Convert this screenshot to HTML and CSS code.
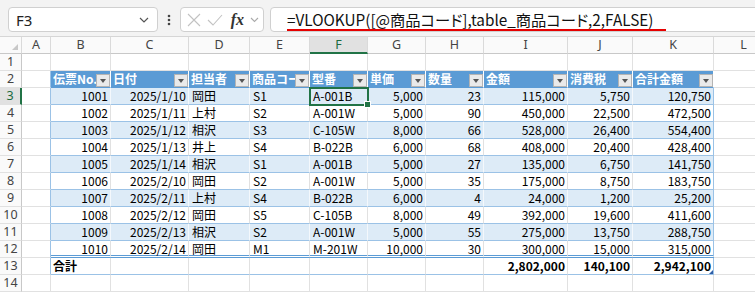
FILE: index.html
```html
<!DOCTYPE html>
<html lang="ja">
<head>
  <meta charset="UTF-8" />
  <title>売上一覧</title>
  <link rel="stylesheet" href="styles.css">
</head>
<body>

<div class="formula-bar">
  <div class="namebox">
    <span>F3</span>
    <svg width="10" height="6" viewBox="0 0 10 6"><path d="M1 1l4 4 4-4" fill="none" stroke="#555" stroke-width="1.2"/></svg>
  </div>
  <div class="dots">
    <svg width="4" height="12" viewBox="0 0 4 12"><circle cx="2" cy="2" r="1.3" fill="#444"/><circle cx="2" cy="6" r="1.3" fill="#444"/><circle cx="2" cy="10" r="1.3" fill="#444"/></svg>
  </div>
  <div class="fxbox">
    <svg width="14" height="14" viewBox="0 0 14 14"><path d="M1 1l12 12M13 1L1 13" stroke="#c2c2c2" stroke-width="1.1"/></svg>
    <svg width="16" height="12" viewBox="0 0 16 12"><path d="M1 6l5 5L15 1" fill="none" stroke="#c2c2c2" stroke-width="1.1"/></svg>
    <i class="fx">fx</i>
    <svg width="9" height="6" viewBox="0 0 9 6"><path d="M1 1l3.5 3.5L8 1" fill="none" stroke="#aaa" stroke-width="1.1"/></svg>
  </div>
  <div class="formula">
    <span class="ftext">=VLOOKUP([@商品コード],table_商品コード,2,FALSE)</span>
  </div>
</div>

<div class="sheet">
  <!-- column letters -->
  <div class="row colhead">
    <div class="corner"><span class="tri"></span></div>
    <div class="ch">A</div>
    <div class="ch">B</div>
    <div class="ch">C</div>
    <div class="ch">D</div>
    <div class="ch">E</div>
    <div class="ch active">F</div>
    <div class="ch">G</div>
    <div class="ch">H</div>
    <div class="ch">I</div>
    <div class="ch">J</div>
    <div class="ch">K</div>
    <div class="ch">L</div>
  </div>

  <div class="row">
    <div class="rh">1</div>
    <div class="c"></div><div class="c"></div><div class="c"></div><div class="c"></div><div class="c"></div><div class="c"></div>
    <div class="c"></div><div class="c"></div><div class="c"></div><div class="c"></div><div class="c"></div><div class="c"></div>
  </div>

  <!-- table header -->
  <div class="row">
    <div class="rh">2</div>
    <div class="c edge"></div>
    <div class="c th"><span>伝票No.</span><b class="fbtn"></b></div>
    <div class="c th"><span>日付</span><b class="fbtn"></b></div>
    <div class="c th"><span>担当者</span><b class="fbtn"></b></div>
    <div class="c th"><span>商品コード</span><b class="fbtn"></b></div>
    <div class="c th"><span>型番</span><b class="fbtn"></b></div>
    <div class="c th"><span>単価</span><b class="fbtn"></b></div>
    <div class="c th"><span>数量</span><b class="fbtn"></b></div>
    <div class="c th"><span>金額</span><b class="fbtn"></b></div>
    <div class="c th"><span>消費税</span><b class="fbtn"></b></div>
    <div class="c th"><span>合計金額</span><b class="fbtn"></b></div>
    <div class="c"></div>
  </div>

  <div class="row band">
    <div class="rh active">3</div>
    <div class="c edge"></div>
    <div class="c td n">1001</div><div class="c td n">2025/1/10</div><div class="c td">岡田</div><div class="c td">S1</div>
    <div class="c td sel">A-001B</div><div class="c td n">5,000</div><div class="c td n">23</div><div class="c td n">115,000</div>
    <div class="c td n">5,750</div><div class="c td n last">120,750</div>
    <div class="c"></div>
  </div>
  <div class="row">
    <div class="rh">4</div>
    <div class="c edge"></div>
    <div class="c td n">1002</div><div class="c td n">2025/1/11</div><div class="c td">上村</div><div class="c td">S2</div>
    <div class="c td">A-001W</div><div class="c td n">5,000</div><div class="c td n">90</div><div class="c td n">450,000</div>
    <div class="c td n">22,500</div><div class="c td n last">472,500</div>
    <div class="c"></div>
  </div>
  <div class="row band">
    <div class="rh">5</div>
    <div class="c edge"></div>
    <div class="c td n">1003</div><div class="c td n">2025/1/12</div><div class="c td">相沢</div><div class="c td">S3</div>
    <div class="c td">C-105W</div><div class="c td n">8,000</div><div class="c td n">66</div><div class="c td n">528,000</div>
    <div class="c td n">26,400</div><div class="c td n last">554,400</div>
    <div class="c"></div>
  </div>
  <div class="row">
    <div class="rh">6</div>
    <div class="c edge"></div>
    <div class="c td n">1004</div><div class="c td n">2025/1/13</div><div class="c td">井上</div><div class="c td">S4</div>
    <div class="c td">B-022B</div><div class="c td n">6,000</div><div class="c td n">68</div><div class="c td n">408,000</div>
    <div class="c td n">20,400</div><div class="c td n last">428,400</div>
    <div class="c"></div>
  </div>
  <div class="row band">
    <div class="rh">7</div>
    <div class="c edge"></div>
    <div class="c td n">1005</div><div class="c td n">2025/1/14</div><div class="c td">相沢</div><div class="c td">S1</div>
    <div class="c td">A-001B</div><div class="c td n">5,000</div><div class="c td n">27</div><div class="c td n">135,000</div>
    <div class="c td n">6,750</div><div class="c td n last">141,750</div>
    <div class="c"></div>
  </div>
  <div class="row">
    <div class="rh">8</div>
    <div class="c edge"></div>
    <div class="c td n">1006</div><div class="c td n">2025/2/10</div><div class="c td">岡田</div><div class="c td">S2</div>
    <div class="c td">A-001W</div><div class="c td n">5,000</div><div class="c td n">35</div><div class="c td n">175,000</div>
    <div class="c td n">8,750</div><div class="c td n last">183,750</div>
    <div class="c"></div>
  </div>
  <div class="row band">
    <div class="rh">9</div>
    <div class="c edge"></div>
    <div class="c td n">1007</div><div class="c td n">2025/2/11</div><div class="c td">上村</div><div class="c td">S4</div>
    <div class="c td">B-022B</div><div class="c td n">6,000</div><div class="c td n">4</div><div class="c td n">24,000</div>
    <div class="c td n">1,200</div><div class="c td n last">25,200</div>
    <div class="c"></div>
  </div>
  <div class="row">
    <div class="rh">10</div>
    <div class="c edge"></div>
    <div class="c td n">1008</div><div class="c td n">2025/2/12</div><div class="c td">岡田</div><div class="c td">S5</div>
    <div class="c td">C-105B</div><div class="c td n">8,000</div><div class="c td n">49</div><div class="c td n">392,000</div>
    <div class="c td n">19,600</div><div class="c td n last">411,600</div>
    <div class="c"></div>
  </div>
  <div class="row band">
    <div class="rh">11</div>
    <div class="c edge"></div>
    <div class="c td n">1009</div><div class="c td n">2025/2/13</div><div class="c td">相沢</div><div class="c td">S2</div>
    <div class="c td">A-001W</div><div class="c td n">5,000</div><div class="c td n">55</div><div class="c td n">275,000</div>
    <div class="c td n">13,750</div><div class="c td n last">288,750</div>
    <div class="c"></div>
  </div>
  <div class="row lastdata">
    <div class="rh">12</div>
    <div class="c edge"></div>
    <div class="c td n">1010</div><div class="c td n">2025/2/14</div><div class="c td">岡田</div><div class="c td">M1</div>
    <div class="c td">M-201W</div><div class="c td n">10,000</div><div class="c td n">30</div><div class="c td n">300,000</div>
    <div class="c td n">15,000</div><div class="c td n last">315,000</div>
    <div class="c"></div>
  </div>

  <!-- totals -->
  <div class="row total">
    <div class="rh">13</div>
    <div class="c edge"></div>
    <div class="c td">合計</div><div class="c td"></div><div class="c td"></div><div class="c td"></div>
    <div class="c td"></div><div class="c td"></div><div class="c td"></div><div class="c td n">2,802,000</div>
    <div class="c td n">140,100</div><div class="c td n last grip">2,942,100</div>
    <div class="c"></div>
  </div>

  <div class="row">
    <div class="rh">14</div>
    <div class="c"></div><div class="c"></div><div class="c"></div><div class="c"></div><div class="c"></div><div class="c"></div>
    <div class="c"></div><div class="c"></div><div class="c"></div><div class="c"></div><div class="c"></div><div class="c"></div>
  </div>
</div>

</body>
</html>
```

FILE: styles.css
```css
body {
  margin: 0;
  overflow: hidden;
  background: #fff;
  font-family: "Noto Sans CJK JP", "Noto Sans", sans-serif;
  color: #000;
}

/* formula bar */
.formula-bar {
  height: 37px;
  box-sizing: border-box;
  padding: 7px 0 0 8px;
  display: flex;
  align-items: flex-start;
  background: #f3f3f3;
  border-bottom: 1px solid #d6d6d6;
}

.namebox,
.fxbox,
.formula {
  height: 25px;
  box-sizing: border-box;
  background: #fff;
  border: 1px solid #d0d0d0;
  border-radius: 4px;
  display: flex;
  align-items: center;
}

.namebox {
  width: 150px;
  padding: 0 8px 0 7px;
  justify-content: space-between;
  font-family: "Noto Sans", sans-serif;
  font-size: 15px;
  color: #222;
}

.dots {
  width: 22px;
  height: 25px;
  display: flex;
  align-items: center;
  justify-content: center;
}

.fxbox {
  width: 84px;
  padding: 0 4px 0 6px;
  justify-content: space-between;
}

.fx {
  font-family: "Liberation Serif", serif;
  font-weight: bold;
  font-size: 16px;
  color: #333;
  margin-left: 2px;
}

.formula {
  flex: 1;
  margin-left: 6px;
  margin-right: -10px;
  padding-left: 16px;
  border-radius: 4px 0 0 4px;
}

.ftext {
  font-size: 15.3px;
  line-height: 19px;
  font-feature-settings: "palt";
  color: #111;
  padding-right: 13px;
  border-bottom: 2px solid #e60000;
  margin-top: 2px;
}

/* sheet grid */
.row {
  display: grid;
  grid-template-columns: 22px 29px 60px 78px 61px 60px 58px 58px 58px 84px 65px 81px 60px;
  height: 17px;
}

.row > div {
  box-sizing: border-box;
  height: 17px;
  white-space: nowrap;
}

.c {
  border-right: 1px solid #e1e1e1;
  border-bottom: 1px solid #e1e1e1;
  font-size: 12px;
  line-height: 16px;
  padding: 0 3px;
}

.colhead > div {
  border-right: 1px solid #dadada;
  border-bottom: 1px solid #c8c8c8;
  background: #fafafa;
  text-align: center;
  font-family: "Noto Sans", sans-serif;
  font-size: 12.5px;
  line-height: 16px;
  color: #444;
}

.corner {
  position: relative;
}

.tri {
  position: absolute;
  right: 3px;
  bottom: 3px;
  border-left: 6px solid transparent;
  border-bottom: 6px solid #c8c8c8;
}

.colhead .active {
  background: #e1e1e1;
  border-bottom: 2px solid #217346;
  color: #1c6b3f;
}

.rh {
  border-right: 1px solid #c8c8c8;
  border-bottom: 1px solid #e1e1e1;
  background: #fafafa;
  text-align: center;
  font-family: "Noto Sans", sans-serif;
  font-size: 12.5px;
  line-height: 16px;
  color: #444;
}

.rh.active {
  background: #e1e1e1;
  border-right: 2px solid #217346;
  color: #1c6b3f;
}

/* table styling */
.c.edge {
  border-right-color: #9bc2e6;
}

.th {
  background: #5b9bd5;
  color: #fff;
  font-weight: bold;
  border-right-color: #fff;
  border-bottom-color: #5b9bd5;
  padding: 0 0 0 2px;
  display: flex;
  justify-content: space-between;
  overflow: hidden;
}

.th span {
  overflow: hidden;
  min-width: 0;
}

.fbtn {
  flex: none;
  align-self: flex-end;
  width: 14px;
  height: 13px;
  box-sizing: border-box;
  background: #eaeaea;
  border: 1px solid #b4b4b4;
  display: flex;
  align-items: center;
  justify-content: center;
}

.fbtn::before {
  content: "";
  border-left: 3.5px solid transparent;
  border-right: 3.5px solid transparent;
  border-top: 4px solid #555;
}

.td {
  border-bottom-color: #9bc2e6;
}

.band .td {
  background: #ddebf7;
  border-right-color: #f4f8fc;
}

.td.n {
  text-align: right;
  padding-right: 2px;
}

.td.last {
  border-right-color: #9bc2e6;
}

.lastdata .td {
  border-bottom: 3px double #5b9bd5;
  line-height: 15px;
}

.total .td {
  font-weight: bold;
  padding-left: 2px;
}

.grip {
  position: relative;
}

.grip::after {
  content: "";
  position: absolute;
  right: 0;
  bottom: 0;
  border-left: 4px solid transparent;
  border-bottom: 4px solid #2f5fa8;
}

/* active cell */
.sel {
  position: relative;
  z-index: 2;
  outline: 2px solid #217346;
  outline-offset: -1px;
}

.sel::after {
  content: "";
  position: absolute;
  right: -4px;
  bottom: -4px;
  width: 5px;
  height: 5px;
  background: #217346;
  border: 1px solid #fff;
}
```
